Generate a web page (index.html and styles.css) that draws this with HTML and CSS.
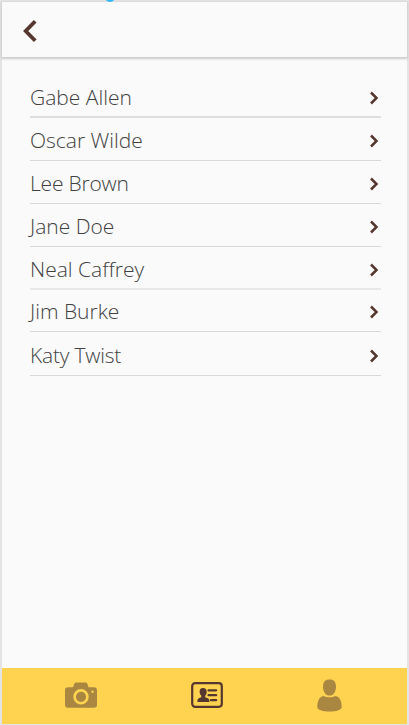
FILE: index.html
```html
<!DOCTYPE html>
<html lang="en">
<head>
<meta charset="utf-8">
<title>Contacts</title>
<link rel="stylesheet" href="styles.css">
</head>
<body>
<div class="screen">
  <span class="handle"></span>
  <header class="header">
    <svg class="back" viewBox="0 0 16 24"><path d="M13.200 2.200 3.700 12l9.500 9.800"/></svg>
  </header>
  <main class="list">
    <div class="row r1"><span class="name">Gabe Allen</span><svg class="chevron" viewBox="0 0 10 14"><path d="m2 1.500 5.500 5.500L2 12.500"/></svg></div>
    <div class="row r2"><span class="name">Oscar Wilde</span><svg class="chevron" viewBox="0 0 10 14"><path d="m2 1.500 5.500 5.500L2 12.500"/></svg></div>
    <div class="row r3"><span class="name">Lee Brown</span><svg class="chevron" viewBox="0 0 10 14"><path d="m2 1.500 5.500 5.500L2 12.500"/></svg></div>
    <div class="row r4"><span class="name">Jane Doe</span><svg class="chevron" viewBox="0 0 10 14"><path d="m2 1.500 5.500 5.500L2 12.500"/></svg></div>
    <div class="row r5"><span class="name">Neal Caffrey</span><svg class="chevron" viewBox="0 0 10 14"><path d="m2 1.500 5.500 5.500L2 12.500"/></svg></div>
    <div class="row r6"><span class="name">Jim Burke</span><svg class="chevron" viewBox="0 0 10 14"><path d="m2 1.500 5.500 5.500L2 12.500"/></svg></div>
    <div class="row r7"><span class="name">Katy Twist</span><svg class="chevron" viewBox="0 0 10 14"><path d="m2 1.500 5.500 5.500L2 12.500"/></svg></div>
  </main>
  <nav class="tabs">
    <svg class="camera" viewBox="0 0 32 26"><path class="muted" d="M3 5.200h5l1.400-3.800Q9.900.4 11 .4h9.600q1.100 0 1.600 1l1.400 3.800H29q3 0 3 3v14.600q0 3-3 3H3q-3 0-3-3V8.200q0-3 3-3Z"/><circle class="lens" cx="16" cy="14.800" r="6.400"/><circle class="dot" cx="27.500" cy="9.700" r="1.200"/></svg>
    <svg class="card" viewBox="0 0 32 26"><rect class="frame" x="1.200" y="1.200" width="29.600" height="23.600" rx="3"/><path class="solid" d="M12 6c2.500 0 3.700 1.600 3.700 3.800 0 1.800-.6 3-1.500 3.900v1.500c1.800.7 4.200 1 4.200 3.300V20H6.400v-1.500c0-2.300 2.200-2.600 3.900-3.300v-1.500c-.9-.9-1.700-2.100-1.700-3.900C8.600 7.600 9.500 6 12 6Z"/><path class="lines" d="M17.500 8.300h7.700M17.500 13.200h7.700M20 18.200h5.200"/></svg>
    <svg class="person" viewBox="0 0 25 33"><path class="muted" d="M12.500.5c4.500 0 6.500 2.600 6.500 7.200 0 5.100-2.600 8.900-6.500 8.900S6 12.800 6 7.700C6 3.100 8 .5 12.500.5Z"/><path class="muted" d="M6.500 17c3.600 1.800 8.400 1.800 12 0 4.500.7 6.200 5.500 6.200 11 0 2.800-5.500 4.600-12.200 4.600S.3 30.800.3 28c0-5.500 1.700-10.300 6.200-11Z"/></svg>
  </nav>
</div>
</body>
</html>
```
FILE: styles.css
```css
* { box-sizing: border-box; }
body { margin: 0; background: #e4e4e4; font-family: "Open Sans", "Noto Sans", sans-serif; }
.screen { position: relative; display: flex; flex-direction: column; height: 725px; padding: 2px 2px 1px; }
.handle { position: absolute; z-index: 1; left: 105px; top: -8px; width: 10px; height: 10px; border-radius: 50%; background: #2cb8fa; }
.header { flex: none; height: 55px; padding: 17px 0 0 20px; background: #fafafa; box-shadow: 0 1px 2px 1px #cccccc; position: relative; }
svg { display: block; flex: none; }
.back { width: 16px; height: 24px; fill: none; stroke: #55372f; stroke-width: 3.8; }
.list { flex: 1; padding: 19px 26px 0 28px; background: #fafafa; }
.row { display: flex; align-items: center; justify-content: space-between; height: 43px; border-bottom: 1px solid #d9d9d9; padding-top: 2px; }
.name { font-size: 21px; font-weight: 300; line-height: 30px; white-space: nowrap; color: #414141; }
.chevron { width: 10px; height: 14px; margin: 2px 2px 0 0; fill: none; stroke: #55372f; stroke-width: 2.5; }
.r1 { height: 42px; border-bottom: 2px solid #dedede; }
.r3 .name, .r7 .name { letter-spacing: -0.2px; }
.r5 { border-bottom: 2px solid #e8e8e8; padding-top: 3px; }
.r6 { height: 42px; padding-top: 1px; }
.r7 { height: 44px; padding-top: 3px; }
.tabs { flex: none; display: flex; height: 56px; background: #ffd350; padding: 11px 65px 0 63px; justify-content: space-between; }
.camera { width: 32px; height: 26px; margin-top: 3px; }
.card { width: 32px; height: 26px; margin-top: 3px; }
.person { width: 25px; height: 33px; }
.muted { fill: #a98741; }
.lens { fill: none; stroke: #ffd350; stroke-width: 2.6; }
.dot { fill: #ffd350; }
.frame { fill: none; stroke: #55372f; stroke-width: 2.2; }
.solid { fill: #55372f; }
.lines { fill: none; stroke: #55372f; stroke-width: 2.2; stroke-linecap: round; }
```
